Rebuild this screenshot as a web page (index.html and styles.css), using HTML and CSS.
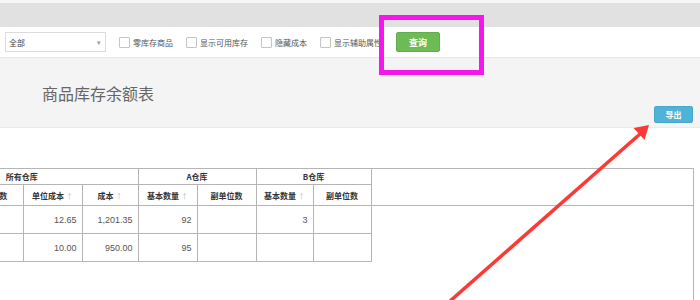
FILE: index.html
```html
<!DOCTYPE html>
<html lang="zh-CN">
<head>
  <meta charset="UTF-8" />
  <title>商品库存余额表</title>
  <link rel="stylesheet" href="styles.css">
</head>
<body>
  <div class="topbar"></div>

  <div class="toolbar">
    <div class="select">
      <span>全部</span>
      <span class="caret">▾</span>
    </div>
    <label class="check"><span class="box"></span>零库存商品</label>
    <label class="check"><span class="box"></span>显示可用库存</label>
    <label class="check"><span class="box"></span>隐藏成本</label>
    <label class="check"><span class="box"></span>显示辅助属性</label>
    <button class="btn btn-query">查询</button>
  </div>

  <section class="report-head">
    <h2 class="title">商品库存余额表</h2>
    <button class="btn btn-export">导出</button>
  </section>

  <div class="grid">
    <div class="grid-head">
      <table class="tbl">
        <colgroup>
          <col style="width:54px"><col style="width:63px"><col style="width:59px"><col style="width:56px">
          <col style="width:59px"><col style="width:59px"><col style="width:57px"><col style="width:58px">
        </colgroup>
        <tr class="row-group">
          <th colspan="4">所有仓库</th>
          <th colspan="2">A仓库</th>
          <th colspan="2">B仓库</th>
        </tr>
        <tr class="row-cols">
          <th class="blank"></th>
          <th>副单位数</th>
          <th>单位成本 <i>↑</i></th>
          <th>成本 <i>↑</i></th>
          <th>基本数量 <i>↑</i></th>
          <th>副单位数</th>
          <th>基本数量 <i>↑</i></th>
          <th>副单位数</th>
        </tr>
      </table>
    </div>
    <table class="tbl tbl-body">
      <colgroup>
        <col style="width:54px"><col style="width:63px"><col style="width:59px"><col style="width:56px">
        <col style="width:59px"><col style="width:59px"><col style="width:57px"><col style="width:58px">
      </colgroup>
      <tr>
        <td class="blank"></td><td></td><td>12.65</td><td>1,201.35</td><td>92</td><td></td><td>3</td><td></td>
      </tr>
      <tr>
        <td class="blank"></td><td></td><td>10.00</td><td>950.00</td><td>95</td><td></td><td></td><td></td>
      </tr>
    </table>
  </div>

  <svg class="marks" width="700" height="300" viewBox="0 0 700 300">
    <rect x="381.5" y="17.5" width="100" height="55" fill="none" stroke="#f316ef" stroke-width="5"/>
    <line x1="449" y1="302" x2="640" y2="134" stroke="#fb3a35" stroke-width="3.5"/>
    <polygon points="649,125 644.5,140 633.5,128" fill="#fb3a35"/>
  </svg>
</body>
</html>
```

FILE: styles.css
```css
body {
  margin: 0;
  position: relative;
  width: 700px;
  height: 300px;
  overflow: hidden;
  background: #fff;
  font-family: "Noto Sans CJK SC", sans-serif;
  color: #555;
}

.topbar {
  height: 24px;
  border-top: 3px solid #f6f6f6;
  background: #e1e1e1;
}

.toolbar {
  height: 30px;
  display: flex;
  align-items: center;
  padding-left: 5px;
  border-bottom: 1px solid #e6e6e6;
  font-size: 8px;
}

.select {
  width: 101px;
  height: 20px;
  box-sizing: border-box;
  border: 1px solid #dcdcdc;
  display: flex;
  align-items: center;
  justify-content: space-between;
  padding: 0 4px 0 3px;
  color: #444;
}

.caret {
  color: #999;
  font-size: 7px;
}

.check {
  display: flex;
  align-items: center;
  margin-left: 13px;
  color: #555;
}

.box {
  width: 11px;
  height: 11px;
  box-sizing: border-box;
  border: 1px solid #c4c4c4;
  border-radius: 1px;
  margin-right: 3px;
  background: #fff;
}

.btn {
  border: none;
  color: #fff;
  font-family: "Noto Sans CJK SC", sans-serif;
  font-weight: bold;
  padding: 0;
  border-radius: 2px;
}

.btn-query {
  width: 44px;
  height: 20px;
  margin-left: 14px;
  font-size: 9px;
  background: #6cbb55;
  border: 1px solid #62ad4c;
}

.report-head {
  height: 70px;
  box-sizing: border-box;
  background: #f4f4f4;
  border-bottom: 1px solid #ebebeb;
  padding: 23px 7px 0 0;
  display: flex;
  flex-direction: column;
}

.title {
  margin: 0 0 0 42px;
  font-size: 16px;
  line-height: 24px;
  font-weight: normal;
  color: #666;
}

.btn-export {
  align-self: flex-end;
  margin-top: 1px;
  width: 39px;
  height: 17px;
  font-size: 8px;
  background: #4fb3d8;
  border: 1px solid #47a7cb;
}

.grid {
  margin: 40px 0 0 -94px;
  width: 788px;
  height: 140px;
  box-sizing: border-box;
  border-top: 1px solid #b5b5b5;
  border-right: 1px solid #b5b5b5;
}

.grid-head {
  border-bottom: 1px solid #b5b5b5;
}

.tbl {
  table-layout: fixed;
  border-collapse: collapse;
  width: 465px;
  font-size: 8px;
}

.tbl th {
  font-weight: bold;
  color: #333;
  text-align: center;
  padding: 0;
  border-right: 1px solid #b5b5b5;
}

.tbl th i {
  font-style: normal;
  font-weight: normal;
  color: #bbb;
  font-size: 7px;
}

.row-group th {
  height: 15px;
  border-bottom: 1px solid #b5b5b5;
}

.row-cols th {
  height: 20px;
}

.tbl th.blank {
  border-right: none;
}

.tbl-body td {
  height: 27px;
  padding: 0 5px 0 0;
  text-align: right;
  font-family: "Liberation Sans", sans-serif;
  font-size: 9px;
  color: #555;
  border-right: 1px solid #b5b5b5;
  border-bottom: 1px solid #b5b5b5;
}

.tbl-body td.blank {
  border-right: none;
}

.marks {
  position: absolute;
  left: 0;
  top: 0;
  pointer-events: none;
}
```
